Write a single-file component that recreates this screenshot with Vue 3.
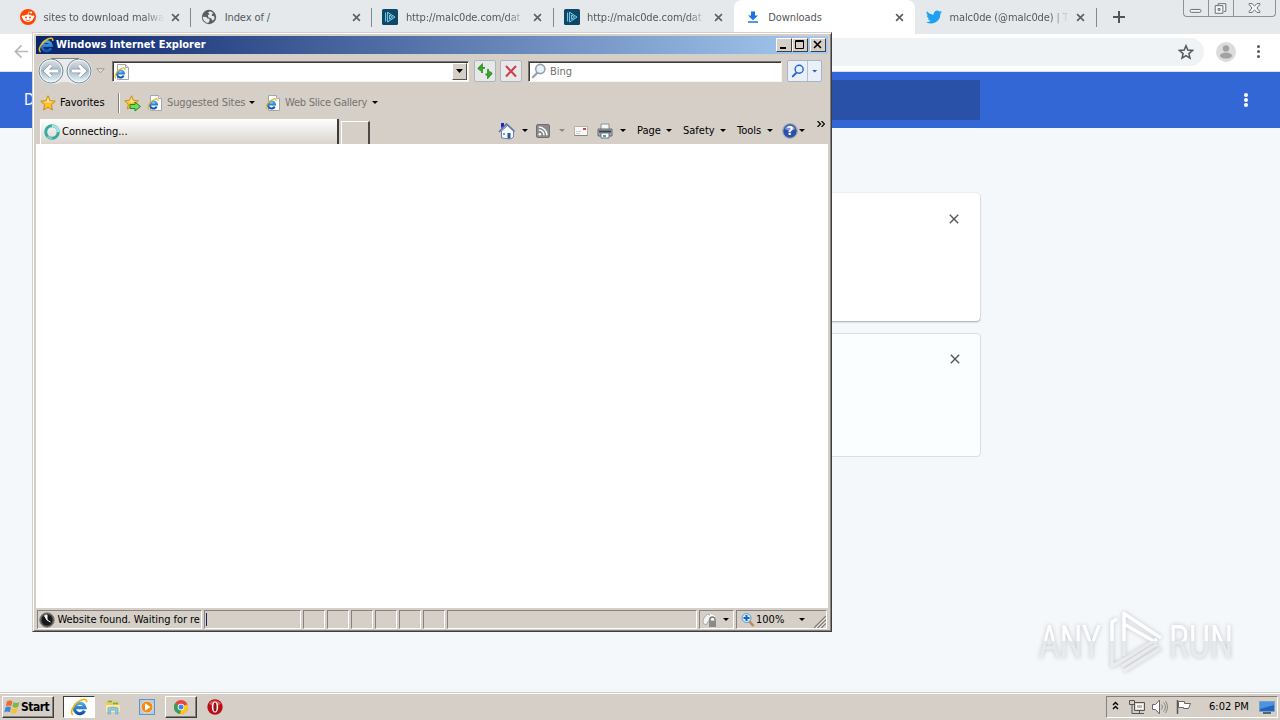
<template>
  <div class="desktop">
    <!-- shared icon shapes -->
    <svg class="defs" aria-hidden="true">
      <defs>
        <linearGradient id="blueGrad" x1="0" y1="0" x2="0" y2="16" gradientUnits="userSpaceOnUse">
          <stop offset=".1" stop-color="#5cc4f5" />
          <stop offset=".9" stop-color="#0f4fae" />
        </linearGradient>
        <linearGradient id="glass" x1="0" y1="0" x2="0" y2="1">
          <stop offset="0" stop-color="#dfe3e6" />
          <stop offset=".5" stop-color="#a9bac6" />
          <stop offset="1" stop-color="#e9fbff" />
        </linearGradient>
        <linearGradient id="logoGrad" x1="0" y1="0" x2="0" y2="72" gradientUnits="userSpaceOnUse">
          <stop offset="0" stop-color="#ffffff" />
          <stop offset=".51" stop-color="#fdfdfd" />
          <stop offset=".52" stop-color="#e6e8e9" />
          <stop offset="1" stop-color="#eceeef" />
        </linearGradient>
        <symbol id="ie" viewBox="0 0 16 16">
          <path d="M12.900 11.300A4.700 4.700 0 1 1 13.300 8.500H5" fill="none" stroke="url(#blueGrad)" stroke-width="2.800" />
          <path d="M2.600 15C-.8 12.800 3.600 4.800 9.200 2.200 12.800.5 15.400.9 14.600 4" fill="none" stroke="#efb71a" stroke-width="1.500" />
        </symbol>
        <symbol id="page" viewBox="0 0 16 16">
          <path d="M3.500.5h8l3 3v12h-11z" fill="#fff" stroke="#a3a7ad" />
          <path d="M11.500.5v3h3" fill="#edf0f3" stroke="#a3a7ad" />
          <use href="#ie" x="0" y="3" width="12" height="12" />
        </symbol>
        <symbol id="star" viewBox="0 0 16 16">
          <path d="M8 .8l2.1 4.8 5.2.6-3.9 3.5 1.1 5.3L8 12.3 3.5 15l1.1-5.3L.7 6.2l5.2-.6z" fill="#ffc12e" stroke="#c98714" stroke-width=".9" />
          <path d="M8 2.6l1.4 3.6 3.4.5-5 1.2-3.5-1.2 2.3-.5z" fill="#ffe894" />
        </symbol>
        <symbol id="anyrun" viewBox="0 0 16 16">
          <rect width="16" height="16" rx="1.5" fill="#0d4967" />
          <path d="M5.600 3.200l7.400 4.900-7.400 4.900zM7.600 6v4.200l3-2.100zM3.600 3.500v9" fill="none" stroke="#7fd0ee" />
        </symbol>
        <symbol id="lens" viewBox="0 0 16 16">
          <path d="M6.500 9.500L2 14.200" stroke="currentColor" stroke-width="2.200" stroke-linecap="round" />
          <circle cx="9.300" cy="6" r="4.600" fill="#e4f2fc" stroke="currentColor" stroke-width="1.600" />
        </symbol>
      </defs>
    </svg>

    <div class="chrome">
      <div class="tabstrip">
        <div v-for="(tab, i) in tabs" :key="i" class="tab" :class="{ active: tab.active, plain: tab.plain }">
          <svg v-if="tab.icon === 'reddit'" class="fav" viewBox="0 0 16 16">
            <circle cx="8" cy="8" r="8" fill="#ff4500" />
            <ellipse cx="8" cy="9.2" rx="5.2" ry="3.7" fill="#fff" />
            <circle cx="2.9" cy="7.8" r="1.2" fill="#fff" /><circle cx="13.1" cy="7.8" r="1.2" fill="#fff" />
            <circle cx="11.2" cy="3.6" r="1" fill="#fff" />
            <path d="M8 5.8l.8-2.9 2.2.6" fill="none" stroke="#fff" stroke-width=".7" />
            <circle cx="6" cy="8.5" r="1" fill="#ff4500" /><circle cx="10" cy="8.5" r="1" fill="#ff4500" />
            <path d="M5.8 10.9q2.2 1.4 4.4 0" fill="none" stroke="#ff4500" stroke-width=".8" />
          </svg>
          <svg v-else-if="tab.icon === 'globe'" class="fav" viewBox="0 0 16 16">
            <circle cx="8" cy="8" r="7.200" fill="#5a5e62" />
            <path d="M1.700 7.800l3.600.1 1.200 1.600 2 .2v2l-1.200 2.400c-3-.4-5.400-2.700-5.600-6.300zM7 3.500l2-1.300 3.600 1.900-1.400.7-.6 2 2.600.4.300 2.600-1.700 2-1.800-2.600-2.400-.7-.8-1.900L8.500 5z" fill="#e7eaed" />
          </svg>
          <svg v-else-if="tab.icon === 'any'" class="fav"><use href="#anyrun" /></svg>
          <svg v-else-if="tab.icon === 'down'" class="fav" viewBox="0 0 16 16">
            <path d="M6 2.5h4v4h3L8 11.300 3 6.500h3zM3 12.200h10v1.600H3z" fill="#1a73e8" />
          </svg>
          <svg v-else class="fav" viewBox="0 0 24 24">
            <path d="M24 4.600a10 10 0 0 1-2.800.8 5 5 0 0 0 2.100-2.700c-1 .6-2 1-3.100 1.200a4.900 4.900 0 0 0-8.400 4.500A14 14 0 0 1 1.700 3.200a4.900 4.900 0 0 0 1.500 6.600 5 5 0 0 1-2.200-.6 4.900 4.900 0 0 0 3.900 4.900 5 5 0 0 1-2.200 0 4.900 4.900 0 0 0 4.600 3.500A9.900 9.900 0 0 1 0 19.500 14 14 0 0 0 21.500 7.100 10 10 0 0 0 24 4.600z" fill="#1da1f2" />
          </svg>
          <span class="tab-title" :class="{ fade: tab.fade }">{{ tab.title }}</span>
          <svg class="tab-x" viewBox="0 0 10 10"><path d="M1.200 1.200l7.600 7.600M8.800 1.200L1.200 8.800" /></svg>
        </div>
        <svg class="plus" viewBox="0 0 12 12"><path d="M6 0v12M0 6h12" /></svg>
        <div class="win-controls">
          <svg viewBox="0 0 25 17"><rect x="6.500" y="9.500" width="11" height="3" rx="1" /></svg>
          <svg viewBox="0 0 25 17"><path d="M9.500 5.500V3.500h8v8h-2" /><path d="M6.500 5.500h8v8h-8zM9.500 8.500h2v2h-2z" /></svg>
          <svg class="wide" viewBox="0 0 42 17"><path d="M15.500 3.500h3l2.500 2.500 2.500-2.500h3v1L23.500 8l3 3.500v1h-3L21 10l-2.500 2.500h-3v-1l3-3.500-3-3.500z" /></svg>
        </div>
      </div>

      <div class="toolbar">
        <svg class="back" viewBox="0 0 16 16"><path d="M15 8H2M8 1.500L1.500 8 8 14.500" /></svg>
        <div class="omnibox">
          <svg viewBox="0 0 16 16"><path d="M8 1.700l1.800 4.400 4.700.4-3.600 3.100 1.100 4.600L8 11.700l-4 2.500 1.100-4.600L1.500 6.500l4.700-.4z" /></svg>
        </div>
        <svg class="avatar" viewBox="0 0 20 20">
          <circle cx="10" cy="10" r="10" fill="#dcdcdc" />
          <circle cx="10" cy="6.400" r="3.200" fill="#a2a2a2" /><ellipse cx="10" cy="13.600" rx="6" ry="3" fill="#a2a2a2" />
        </svg>
        <div class="dots"><i></i><i></i><i></i></div>
      </div>

      <div class="dl-header">
        <span>D</span>
        <div class="dl-search"></div>
        <div class="dots"><i></i><i></i><i></i></div>
      </div>

      <div class="dl-body">
        <div v-for="n in 2" :key="n" class="card" :class="{ removed: n === 2 }">
          <svg viewBox="0 0 10 10"><path d="M.8.8l8.400 8.400M9.200.8L.8 9.200" /></svg>
        </div>
      </div>
    </div>

    <!-- watermark -->
    <svg class="watermark" viewBox="0 0 210 72">
      <g fill="url(#logoGrad)">
        <text x="9" y="54" textLength="62" lengthAdjust="spacingAndGlyphs">ANY</text>
        <text x="139" y="54" textLength="64" lengthAdjust="spacingAndGlyphs">RUN</text>
      </g>
      <g fill="none" stroke="url(#logoGrad)" stroke-width="3.500" stroke-linejoin="round">
        <path d="M94 52V9.500L131 34M94 20l33 19M127 40L92 62" />
        <path d="M87 15l-5 3v44l6-3 39-24M94 67l37-23" />
      </g>
    </svg>

    <div class="ie">
      <div class="ie-title">
        <svg class="i16"><use href="#ie" /></svg>
        <b>Windows Internet Explorer</b>
        <div class="caption">
          <button><svg viewBox="0 0 14 12"><path d="M3 9h6" stroke-width="2" /></svg></button>
          <button><svg viewBox="0 0 14 12"><path d="M2.500 1.500h8v8h-8zM2 2.500h9" /></svg></button>
          <button class="x"><svg viewBox="0 0 14 12"><path d="M3 2l7 7M10 2L3 9" stroke-width="1.600" /></svg></button>
        </div>
      </div>

      <div class="nav">
        <svg class="travel" viewBox="0 0 56 28">
          <path d="M14 1h28a13 13 0 0 1 0 26q-7 0-10-2h-8q-3 2-10 2a13 13 0 0 1 0-26z" fill="#e9ebed" />
          <path d="M14 1.500h28" stroke="#7b7f86" />
          <g v-for="x in [14, 42]" :key="x">
            <circle :cx="x" cy="14" r="12" fill="url(#glass)" stroke="#7e8a94" />
            <circle :cx="x" cy="14" r="10.800" fill="none" stroke="#eef7fb" />
          </g>
          <path d="M21 14H9M14 8.500L8.500 14l5.500 5.500M35 14h12M42 8.500l5.500 5.500-5.500 5.500" fill="none" stroke="#8496a3" stroke-width="4.500" />
          <path d="M21 14H9M14 8.500L8.500 14l5.500 5.500M35 14h12M42 8.500l5.500 5.500-5.500 5.500" fill="none" stroke="#fff" stroke-width="3" />
        </svg>
        <svg class="hist" viewBox="0 0 9 6"><path d="M.7.700h7.600L4.500 4.700z" fill="#e3dfd9" stroke="#9f9b96" /></svg>
        <div class="field address">
          <svg class="i16"><use href="#page" /></svg>
          <div class="combo"><i class="arrow"></i></div>
        </div>
        <div class="nav-btn refresh">
          <svg viewBox="0 0 16 16">
            <path d="M1 6l4-4v2.800h3M5 4.500V10M15 10l-4 4.500v-3H8.500M11 11V6" fill="none" stroke="#2e9424" stroke-width="1.800" />
            <path d="M1 6.500L5 2v7zM15 9.500L11 14V7z" fill="#3ba32c" />
          </svg>
        </div>
        <div class="nav-btn stop">
          <svg viewBox="0 0 16 16"><path d="M3 3l10 10.500M13 3L3 13.500" stroke="#d23b42" stroke-width="2" /></svg>
        </div>
        <div class="field search">
          <svg class="i16 lens-grey"><use href="#lens" /></svg>
          <span>Bing</span>
        </div>
        <div class="search-btn">
          <div><svg class="lens-blue"><use href="#lens" /></svg></div>
          <div><i class="arrow blue"></i></div>
        </div>
      </div>

      <div class="favs">
        <svg class="i16"><use href="#star" /></svg>
        <span class="t-fav">Favorites</span>
        <i class="vsep"></i>
        <svg class="star-add" viewBox="0 0 17 16">
          <use href="#star" width="15" height="15" />
          <path d="M6 9.500h5V7l5.500 4.500L11 16v-2.500H6z" fill="#6fdc5a" stroke="#218a22" />
        </svg>
        <svg class="i16 p1"><use href="#page" /></svg>
        <span class="grey t-sug">Suggested Sites</span>
        <i class="arrow"></i>
        <svg class="i16 p2"><use href="#page" /></svg>
        <span class="grey t-web">Web Slice Gallery</span>
        <i class="arrow"></i>
      </div>

      <div class="tabrow">
        <div class="ie-tab">
          <svg class="i16" viewBox="0 0 16 16">
            <circle cx="8" cy="8" r="6.300" fill="none" stroke="#3aa99e" stroke-width="3" />
            <path d="M8 1.700A6.300 6.300 0 0 1 14.300 8" fill="none" stroke="#a6e6df" stroke-width="2.500" />
            <path d="M3.500 12.400a6.300 6.300 0 0 0 4.500 1.900" fill="none" stroke="#79cbc4" stroke-width="2.500" />
          </svg>
          <span>Connecting...</span>
        </div>
        <div class="ie-newtab"></div>
        <div class="cmd">
          <svg class="i18" viewBox="0 0 18 18">
            <path d="M3.500 9v7l9 1 3-2V8L10 3z" fill="#f4f7fc" stroke="#6e7ea2" />
            <path d="M1 10L8.500 2l8 7.500" fill="none" stroke="#5b78ae" stroke-width="1.600" />
            <path d="M9.500 11h3v5.500h-3z" fill="#2c569c" /><path d="M5 11h2v2H5z" fill="#7c9bd0" />
            <path d="M3 1h3v3L3 6z" fill="#2528b6" />
          </svg>
          <i class="arrow"></i>
          <svg class="i14 rss" viewBox="0 0 14 14">
            <rect x=".5" y=".5" width="13" height="13" rx="1.500" fill="#8b8b8b" stroke="#6f6f6f" />
            <circle cx="3.800" cy="10.200" r="1.300" fill="#fff" />
            <path d="M2.800 6a5.200 5.200 0 0 1 5.200 5.200M2.800 3a8.200 8.200 0 0 1 8.200 8.200" fill="none" stroke="#fff" stroke-width="1.400" />
          </svg>
          <i class="arrow dim"></i>
          <svg class="i14 mail" viewBox="0 0 14 12">
            <path d="M.5 1.500h13v9H.5z" fill="#f8f8f8" stroke="#b3afab" /><path d="M.5 10.500h13" stroke="#86827e" />
            <path d="M9 3h3v2H9z" fill="#d34545" /><path d="M2 6.500h5M2 8.500h4" stroke="#cccfd4" />
          </svg>
          <svg class="i16 print" viewBox="0 0 16 16">
            <path d="M4 1h8v6H4z" fill="#f5f6f8" stroke="#8c8f96" />
            <path d="M1 6h14v7H1z" fill="#a3a7ae" stroke="#6b6f77" /><path d="M2 8.500h12" stroke="#3c4047" stroke-width="2" />
            <path d="M4 10h8v5H4z" fill="#fff" stroke="#6d7077" /><path d="M6 12h3v2H6z" fill="#38a3cb" />
          </svg>
          <i class="arrow a2"></i>
          <template v-for="m in menus" :key="m">
            <span :class="['menu', m.toLowerCase()]">{{ m }}</span><i class="arrow"></i>
          </template>
          <svg class="i16 help" viewBox="0 0 16 16">
            <circle cx="8" cy="8" r="7.300" fill="#2b4fa8" stroke="#a5a9b7" stroke-width="1.200" />
            <path d="M2.500 6a6 6 0 0 1 11 0q-5 3-11 0z" fill="#7595d8" />
            <text x="8" y="12.300" text-anchor="middle" fill="#fff">?</text>
          </svg>
          <i class="arrow a3"></i>
          <svg class="more" viewBox="0 0 8 6"><path d="M.500 0L3.500 3l-3 3M4.500 0l3 3-3 3" /></svg>
        </div>
      </div>

      <div class="ie-page"></div>

      <div class="status">
        <div class="pane msg">
          <svg class="i16" viewBox="0 0 16 16">
            <circle cx="8" cy="8" r="7.300" fill="#555" stroke="#8b8785" /><circle cx="8" cy="8" r="5.500" fill="#18181a" />
            <path d="M8 8V3A5 5 0 0 0 5.500 3.700zM8 8l3.500 2" fill="#fff" stroke="#fff" />
          </svg>
          <span>Website found. Waiting for re</span>
        </div>
        <div class="pane prog"><i></i></div>
        <div v-for="n in 6" :key="n" class="pane small"></div>
        <div class="pane zone"></div>
        <div class="pane lock">
          <svg class="i16" viewBox="0 0 16 16">
            <path d="M1 11C1 6 3 3 7 2l2 3-5 8z" fill="#f6f6f6" stroke="#aaa7a4" /><path d="M8 2l5 2v4H8z" fill="#fff" />
            <path d="M8 9V7.500a2.500 2.500 0 0 1 5 0V9" fill="none" stroke="#777" stroke-width="1.300" />
            <path d="M7 9h7v6H7z" fill="#8a8a8c" />
          </svg>
          <i class="arrow"></i>
        </div>
        <div class="pane zoom">
          <svg class="i14" viewBox="0 0 14 14">
            <path d="M8 8l4.500 5" stroke="#b98b4a" stroke-width="2.500" />
            <circle cx="5.500" cy="5" r="4.500" fill="#d4eafa" stroke="#5f9bd0" /><path d="M5.500 2v6M2.500 5h6" stroke="#1565b8" stroke-width="2" />
          </svg>
          <span>100%</span>
          <i class="arrow"></i>
          <svg class="grip" viewBox="0 0 13 13">
            <path d="M0 13L13 0M4 13l9-9M8 13l5-5" stroke="#85817c" stroke-width="1.500" /><path d="M2 13L13 2M6 13l7-7M10 13l3-3" stroke="#fff" stroke-width=".8" />
          </svg>
        </div>
      </div>
    </div>

    <div class="taskbar">
      <div class="start">
        <svg viewBox="0 0 17 16">
          <path d="M3 2.500q3-2 5.500 0L7.300 7.300q-2.500-1.800-5.500 0z" fill="#ee6b36" />
          <path d="M9.500 3q3 1.800 6 0l-1.300 4.800q-3 1.800-5.800 0z" fill="#7cb940" />
          <path d="M1.500 8.500q3-2 5.500 0l-1.200 4.800q-2.600-1.800-5.500 0z" fill="#4186d0" />
          <path d="M8 9q3 1.800 6 0l-1.300 4.800q-3 1.800-5.800 0z" fill="#f7c231" />
        </svg>
        <b>Start</b>
      </div>
      <div class="task pressed"><svg class="i18"><use href="#ie" /></svg></div>
      <div class="task">
        <svg class="i16" viewBox="0 0 16 16">
          <path d="M1 3l1-2h5l1 1h6v11H1z" fill="#eacb68" /><path d="M3 2.500h4M8 4.500h5" stroke="#59b464" stroke-width="1.500" />
          <path d="M1 6h14v7H1z" fill="#f9e9a1" /><path d="M3 15V9q5-2 10 0v6h-2.500v-4h-5v4z" fill="#8fcbea" stroke="#609ebf" stroke-width=".6" />
        </svg>
      </div>
      <div class="task">
        <svg class="i16" viewBox="0 0 16 16">
          <rect x=".5" y=".5" width="15" height="15" fill="#a9cdee" stroke="#5f95cd" />
          <circle cx="8" cy="8" r="6" fill="#f58b13" stroke="#fff3df" stroke-width=".7" /><path d="M6 4.200L11.500 8 6 11.800z" fill="#fff" />
        </svg>
      </div>
      <div class="task raised">
        <svg class="i14" viewBox="0 0 14 14">
          <circle cx="7" cy="7" r="7" fill="#e5483a" />
          <path d="M7 7L1 3.400A7 7 0 0 0 6.300 14z" fill="#2fa350" /><path d="M7 7l6.500-2.700A7 7 0 0 1 6.300 14z" fill="#fbc916" />
          <circle cx="7" cy="7" r="3.300" fill="#fff" /><circle cx="7" cy="7" r="2.500" fill="#4084ef" />
        </svg>
      </div>
      <div class="task">
        <svg class="i16" viewBox="0 0 16 16">
          <circle cx="8" cy="8" r="7.700" fill="#b80f14" /><path d="M2 5a7 7 0 0 1 12 0q-6 3-12 0z" fill="#e05a55" />
          <ellipse cx="8" cy="8" rx="3.200" ry="5.500" fill="#fff" /><ellipse cx="8" cy="8" rx="1.600" ry="4.600" fill="#a30d11" />
        </svg>
      </div>
      <div class="tray">
        <svg class="chev" viewBox="0 0 7 9"><path d="M1 4l2.500-2.500L6 4M1 8l2.500-2.500L6 8" fill="none" stroke="#000" stroke-width="1.400" /></svg>
        <svg class="i16 net" viewBox="0 0 16 16">
          <path d="M5.500 3.500h10v8h-10z" fill="#dedbd6" stroke="#555" /><path d="M7.500 5.500h6v4h-6z" fill="#bbb8b3" stroke="#fff" />
          <path d="M4 14.500h11M10.500 12v2" stroke="#555" /><path d="M.500 1.500h5v4h-5zM3 5.500v9h4" fill="none" stroke="#555" />
        </svg>
        <svg class="i16 vol" viewBox="0 0 16 16">
          <path d="M.500 5.500h3L7.500 1v14l-4-4.500h-3z" fill="#fff" stroke="#666" />
          <path d="M9.500 5.500q2 2.500 0 5M11.500 3.500q4 4.500 0 9M13.500 2q4 6 0 12" fill="none" stroke="#8a8783" />
        </svg>
        <svg class="i16 flag" viewBox="0 0 16 16">
          <path d="M1.500 1v14" stroke="#555" stroke-width="1.500" /><path d="M2.500 2.500h6v2h6l-2 5h-5v-1h-5z" fill="#fff" stroke="#666" />
        </svg>
        <span>6:02 PM</span>
        <svg class="i16 desk" viewBox="0 0 16 13">
          <path d="M.5.500h15v10H.500z" fill="#2163bd" stroke="#7f9dc5" /><path d="M1 1h14v3L1 8z" fill="#4d93df" /><path d="M4 12h8" stroke="#2f4056" stroke-width="1.500" />
        </svg>
      </div>
    </div>
  </div>
</template>

<script setup>
const tabs = [
  { icon: 'reddit', title: 'sites to download malwa', fade: true },
  { icon: 'globe', title: 'Index of /' },
  { icon: 'any', title: 'http://malc0de.com/dat', fade: true },
  { icon: 'any', title: 'http://malc0de.com/dat', fade: true, plain: true },
  { icon: 'down', title: 'Downloads', active: true },
  { icon: 'twitter', title: 'malc0de (@malc0de) | T', fade: true },
]

const menus = ['Page', 'Safety', 'Tools']
</script>

<style>
body {
  margin: 0;
  overflow: hidden;
}
</style>

<style scoped>
* {
  box-sizing: border-box;
}
.desktop {
  position: relative;
  width: 1280px;
  height: 720px;
  display: flex;
  flex-direction: column;
  overflow: hidden;
  font: 11px/14px "DejaVu Sans Condensed", "DejaVu Sans", sans-serif;
  font-stretch: condensed;
  color: #000;
  white-space: nowrap;
}
svg {
  flex: none;
  display: block;
}
.defs {
  position: absolute;
  width: 0;
  height: 0;
}
.i14 { width: 14px; height: 14px; }
.i16 { width: 16px; height: 16px; }
.i18 { width: 18px; height: 18px; }

/* browser behind */
.chrome {
  height: 692px;
  display: flex;
  flex-direction: column;
  background: #f5f8fb;
}
.tabstrip {
  height: 34px;
  padding-left: 9px;
  display: flex;
  background: #e5e9eb;
}
.tab {
  width: 181.200px;
  height: 34px;
  padding-left: 11px;
  display: flex;
  align-items: center;
  position: relative;
  color: #54585c;
}
.tab::after {
  content: "";
  position: absolute;
  right: -1px;
  top: 8px;
  width: 1px;
  height: 19px;
  background: #85898d;
}
.tab.active::after,
.tab.plain::after {
  display: none;
}
.tab.active {
  background: #fff;
  border-radius: 8px 8px 0 0;
}
.fav {
  width: 16px;
  height: 16px;
}
.tab-title {
  width: 120px;
  margin: 1px 0 0 7.500px;
  letter-spacing: -.1px;
}
.tab-title.fade {
  mask-image: linear-gradient(90deg, #000 84%, transparent);
}
.tab-x {
  width: 9px;
  height: 9px;
  margin-left: 7px;
  stroke: #5c6064;
  stroke-width: 1.800;
}
.plus {
  width: 12px;
  height: 12px;
  margin: 11px 0 0 17px;
  stroke: #50555a;
  stroke-width: 2;
}
.win-controls {
  display: flex;
  width: 93px;
  height: 17px;
  margin: 0 4px 0 auto;
  border: 1px solid #8e9295;
  border-top: 0;
  border-radius: 0 0 4px 4px;
}
.win-controls svg {
  width: 25px;
  height: 17px;
  fill: #f5f6f7;
  stroke: #666a6f;
  border-right: 1px solid #8e9295;
}
.win-controls .wide {
  width: 41px;
  border: 0;
}
.toolbar {
  height: 38px;
  padding: 0 20px 2px 14px;
  display: flex;
  align-items: center;
  background: #fff;
  border-bottom: 1px solid #dbe0e6;
}
.back {
  width: 15px;
  height: 15px;
  fill: none;
  stroke: #b6b8ba;
  stroke-width: 1.800;
}
.omnibox {
  flex: 1;
  height: 28px;
  margin: 0 12px 0 90px;
  padding-right: 10px;
  display: flex;
  align-items: center;
  justify-content: flex-end;
  border-radius: 14px;
  background: #f0f3f5;
}
.omnibox svg {
  width: 16px;
  height: 16px;
  fill: none;
  stroke: #54585d;
  stroke-width: 1.500;
}
.avatar {
  width: 20px;
  height: 20px;
}
.dots {
  display: flex;
  flex-direction: column;
  gap: 2px;
}
.dots i {
  width: 3px;
  height: 3px;
  border-radius: 50%;
  background: #54585d;
}
.toolbar .dots {
  margin-left: 21px;
}
.dl-header {
  height: 56px;
  padding: 0 32px 0 24px;
  display: flex;
  align-items: center;
  color: #fff;
  font-size: 15px;
  background: #3367d6;
}
.dl-header span {
  width: 276px;
}
.dl-search {
  width: 680px;
  height: 40px;
  background: #2a51a8;
}
.dl-header .dots {
  margin-left: auto;
}
.dl-header .dots i {
  width: 4px;
  height: 4px;
  background: #fff;
}
.dl-header .dots {
  gap: 1px;
}
.dl-body {
  flex: 1;
  padding-top: 65px;
  display: flex;
  flex-direction: column;
  align-items: center;
  gap: 12px;
}
.card {
  width: 680px;
  height: 128px;
  padding: 21px 21px 0 0;
  display: flex;
  justify-content: flex-end;
  background: #fff;
  border-radius: 4px;
  box-shadow: 0 1px 2px #9ea6a8, 0 0 1px #c8cdd0;
}
.card.removed {
  width: 681px;
  height: 124px;
  background: #fafefe;
  border: 1px solid #dbdfe1;
  box-shadow: none;
  padding: 20px 20px 0 0;
}
.card svg {
  width: 10px;
  height: 10px;
  stroke: #54585d;
  stroke-width: 1.400;
}

.watermark {
  position: absolute;
  left: 1030px;
  top: 604px;
  width: 210px;
  height: 72px;
  filter: drop-shadow(0 0 2px #bfc3c7);
}
.watermark text {
  font: 46px "Liberation Sans Narrow", "Roboto", sans-serif;
}

/* foreground window */
.ie {
  position: absolute;
  left: 32px;
  top: 32px;
  width: 800px;
  height: 600px;
  display: flex;
  flex-direction: column;
  padding: 2px 1px 0 2px;
  background: #d5cfc8;
  border: 1px solid;
  border-color: #d5cfc8 #3e3e40 #3e3e40 #d5cfc8;
  box-shadow: inset 1px 1px #fff, inset -1px -1px #85817e;
}
.ie-title {
  flex: none;
  height: 18px;
  margin: 1px 2px 0 1px;
  padding: 0 2px 0 2px;
  display: flex;
  align-items: center;
  color: #fff;
  background: linear-gradient(90deg, #0a246a, #a6caf0);
}
.ie-title b {
  margin-left: 2px;
}
.caption {
  display: flex;
  margin-left: auto;
}
.caption button {
  width: 16px;
  height: 14px;
  padding: 0;
  background: #d5cfc8;
  border: 1px solid;
  border-color: #fff #404040 #404040 #fff;
}
.caption .x {
  margin-left: 2px;
}
.caption svg {
  width: 14px;
  height: 12px;
  fill: none;
  stroke: #000;
}
.nav {
  flex: none;
  height: 34px;
  padding-left: 2px;
  display: flex;
  align-items: center;
}
.travel {
  width: 56px;
  height: 28px;
}
.hist {
  width: 9px;
  height: 6px;
  margin-left: 3px;
}
.field {
  height: 21px;
  display: flex;
  align-items: center;
  background: #fff;
  border: 1px solid;
  border-color: #77736f #f6f4f1 #f6f4f1 #77736f;
  box-shadow: inset 1px 1px #3c3a39;
}
.address {
  width: 357px;
  margin-left: 7px;
  padding: 0 1px;
}
.address .i16 {
  margin-top: 1px;
}
.combo {
  width: 15px;
  height: 17px;
  margin-left: auto;
  display: grid;
  place-items: center;
  background: #d5cfc8;
  border: 1px solid;
  border-color: #fff #55524f #55524f #fff;
}
.arrow {
  flex: none;
  width: 6px;
  height: 3px;
  background: #000;
  clip-path: polygon(0 0, 100% 0, 50% 100%);
}
.combo .arrow {
  width: 7px;
  height: 4px;
}
.arrow.dim { background: #8d8985; }
.arrow.blue { background: #2563b9; }
.nav-btn {
  width: 22px;
  height: 22px;
  display: grid;
  place-items: center;
  background: #e6e8e9;
  border: 1px solid #b0b5bb;
  border-radius: 2px;
}
.nav-btn svg {
  width: 16px;
  height: 16px;
}
.refresh { margin-left: 5px; }
.stop { margin-left: 4px; }
.search {
  width: 254px;
  margin-left: 6px;
  padding-left: 2px;
  color: #717171;
}
.search span {
  margin: 2px 0 0 3px;
}
.lens-grey { color: #96a0aa; }
.search-btn {
  display: flex;
  width: 35px;
  height: 22px;
  margin-left: 5px;
  background: #eaf0f8;
  border: 1px solid #a9b5c4;
  border-radius: 2px;
}
.search-btn div {
  width: 20px;
  display: grid;
  place-items: center;
}
.search-btn div + div {
  width: 14px;
  border-left: 1px solid #b6c1ce;
}
.lens-blue {
  width: 14px;
  height: 14px;
  color: #2263cf;
}
.favs {
  flex: none;
  height: 29px;
  padding-left: 5px;
  display: flex;
  align-items: center;
}
.favs span { flex: none; }
.grey { color: #77736f; }
.t-fav { width: 54px; margin-left: 4px; }
.vsep {
  width: 2px;
  height: 20px;
  margin: 0 4px 0 4px;
  border-left: 1px solid #85817c;
  border-right: 1px solid #fff;
}
.star-add { width: 17px; height: 16px; }
.p1 { margin-left: 6px; }
.t-sug { width: 82px; margin: 1px 0 0 4px; letter-spacing: -.1px; }
.p2 { margin-left: 10px; }
.t-web { width: 87px; margin: 1px 0 0 4px; letter-spacing: -.25px; }
.tabrow {
  flex: none;
  height: 27px;
  padding-left: 5px;
  display: flex;
  align-items: flex-end;
}
.ie-tab {
  width: 299px;
  height: 25px;
  padding-left: 3px;
  display: flex;
  align-items: center;
  background: linear-gradient(#fff, #d9d4cd);
  border-left: 1px solid #fff;
  border-right: 2px solid #3e3c3b;
}
.ie-tab span {
  margin: 1px 0 0 2px;
}
.ie-newtab {
  width: 29px;
  height: 23px;
  margin-left: 2px;
  border: 1px solid #fff;
  border-right: 2px solid #4b4846;
  border-bottom: 0;
}
.cmd {
  height: 27px;
  margin-left: 128px;
  display: flex;
  align-items: center;
}
.cmd > * { flex: none; }
.cmd .arrow { margin-left: 6px; }
.rss { margin-left: 8px; }
.cmd .dim { margin-left: 9px; }
.mail { margin-left: 9px; height: 12px; }
.print { margin-left: 9px; }
.cmd .a2 { margin-left: 7px; }
.menu { width: 25px; margin-left: 11px; }
.menu.safety { width: 33px; margin-left: 11px; }
.menu.tools { width: 26px; margin-left: 11px; }
.menu.page ~ .arrow { margin-left: 4px; }
.help { margin-left: 9px; }
.help text { font: bold 12px "DejaVu Sans", sans-serif; }
.cmd .a3 { margin-left: 1px !important; }
.more {
  width: 8px;
  height: 6px;
  margin: -14px 0 0 12px;
  fill: none;
  stroke: #000;
  stroke-width: 1.200;
}
.ie-page {
  flex: 1;
  margin: 0 2px 0 1px;
  background: #fff;
}
.status {
  flex: none;
  height: 23px;
  padding: 2px 1px 2px 2px;
  display: flex;
  gap: 2px;
}
.pane {
  flex: none;
  height: 19px;
  display: flex;
  align-items: center;
  overflow: hidden;
  border: 1px solid;
  border-color: #85817e #fff #fff #85817e;
}
.msg { width: 165px; padding-left: 1px; }
.msg span { margin-left: 2.500px; letter-spacing: -.06px; }
.prog { width: 97px; padding-left: 1px; }
.prog i { width: 1px; height: 13px; background: #17225e; }
.small { width: 22px; }
.zone { width: 250px; }
.lock { width: 35px; padding-left: 2px; }
.lock .arrow { margin-left: 5px; }
.zoom { width: 91px; padding-left: 4px; position: relative; }
.zoom span { width: 30px; margin-left: 1px; }
.zoom .arrow { margin-left: 13px; }
.grip {
  position: absolute;
  right: 0;
  bottom: 0;
  width: 12px;
  height: 12px;
}

.taskbar {
  height: 28px;
  padding: 3px 2px 0 2px;
  display: flex;
  background: #d5cfc8;
  border-top: 1px solid #d5cfc8;
  box-shadow: inset 0 1px #fff;
}
.start {
  width: 52px;
  height: 22px;
  margin-right: 9px;
  padding-left: 1px;
  display: flex;
  align-items: center;
  border: 1px solid;
  border-color: #fff #3e3c3b #3e3c3b #fff;
  box-shadow: inset -1px -1px #85817e;
}
.start svg { width: 17px; height: 16px; }
.start b { font-size: 12px; letter-spacing: -.5px; }
.task {
  width: 32px;
  height: 22px;
  margin-right: 2px;
  display: grid;
  place-items: center;
  border: 1px solid transparent;
}
.pressed {
  background: #fff;
  border-color: #3e3c3b #fff #fff #3e3c3b;
}
.raised {
  border-color: #fff #3e3c3b #3e3c3b #fff;
  box-shadow: inset -1px -1px #85817e;
}
.tray {
  width: 172px;
  height: 22px;
  margin-left: auto;
  padding-left: 5px;
  display: flex;
  align-items: center;
  border: 1px solid;
  border-color: #85817e #fff #fff #85817e;
}
.chev { width: 7px; height: 9px; margin-top: -3px; }
.net { margin-left: 10px; }
.vol { margin-left: 7px; }
.flag { margin-left: 8px; }
.tray span { width: 41px; margin-left: 17px; }
.desk { height: 13px; margin-left: 9px; }
</style>
